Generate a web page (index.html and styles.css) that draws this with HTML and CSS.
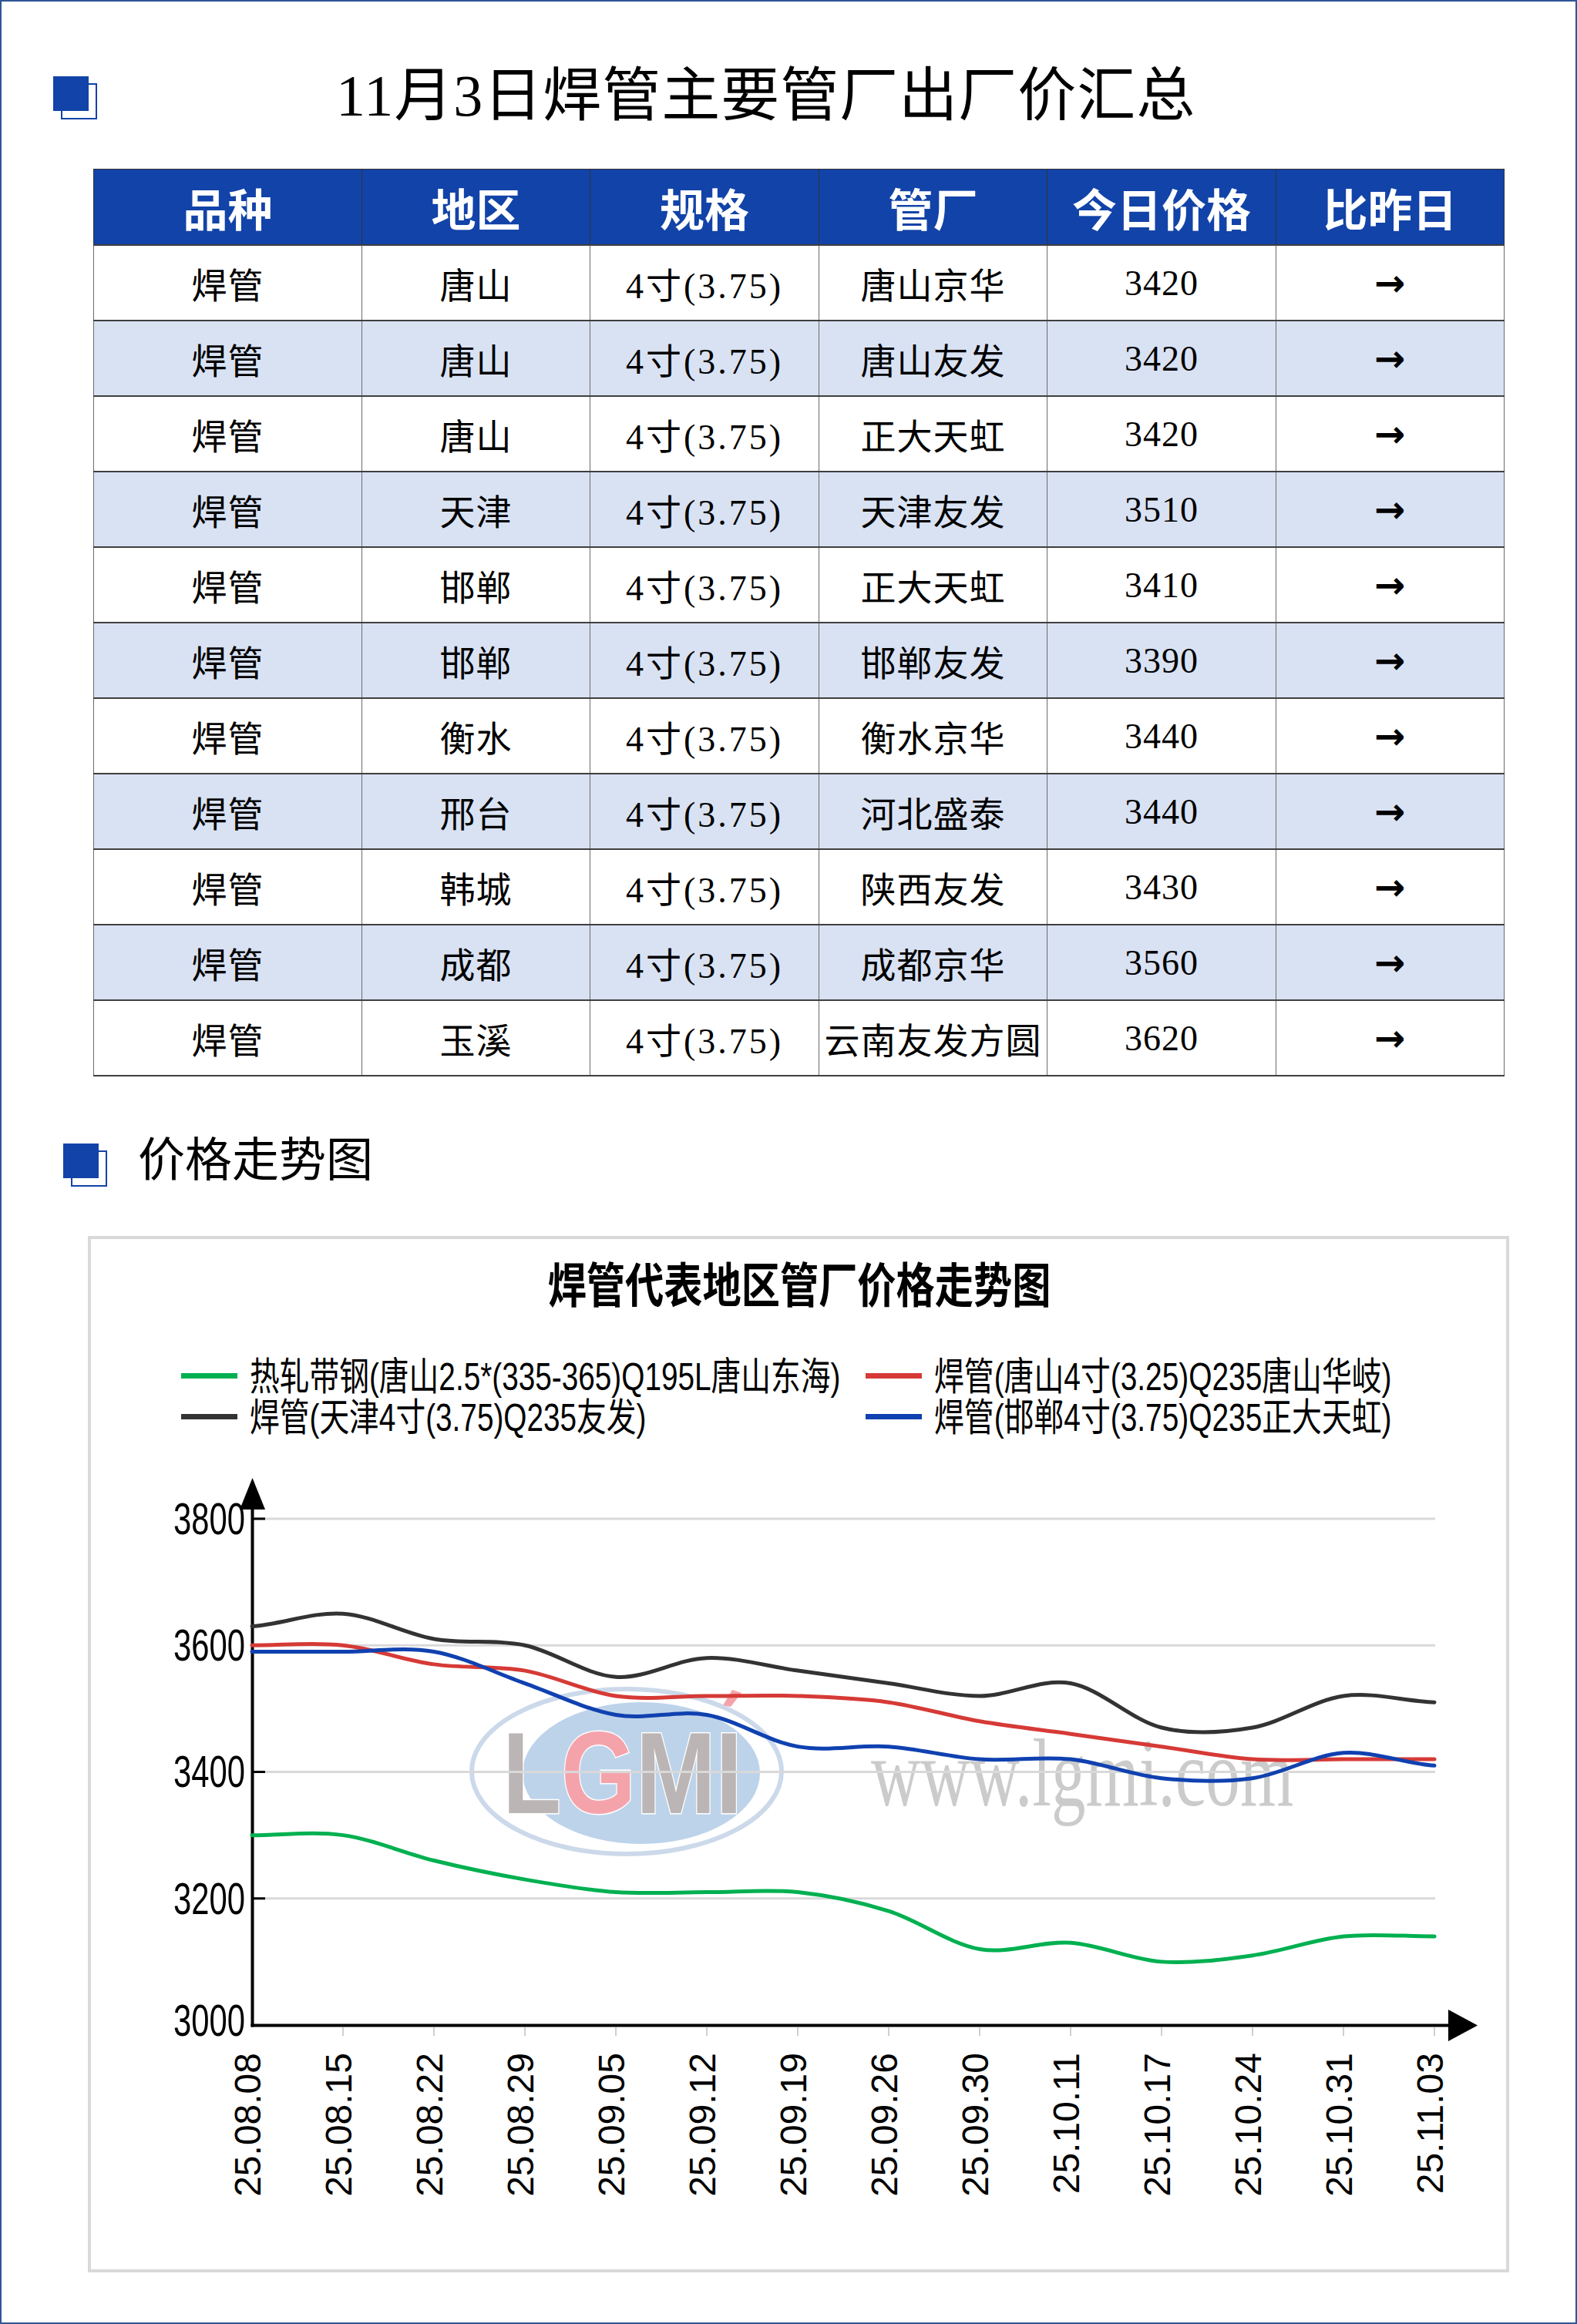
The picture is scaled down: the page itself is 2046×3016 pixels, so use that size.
FILE: index.html
```html
<!DOCTYPE html>
<html lang="zh-CN">
<head>
<meta charset="utf-8">
<title>11月3日焊管主要管厂出厂价汇总</title>
<link rel="stylesheet" href="styles.css">
</head>
<body>
<div class="page">
  <header class="title-row">
    <span class="mark mark-top"></span>
    <h1 class="title">11月3日焊管主要管厂出厂价汇总</h1>
  </header>

  <table class="price-table">
    <colgroup>
      <col class="c1"><col class="c2"><col class="c3"><col class="c4"><col class="c5"><col class="c6">
    </colgroup>
    <thead>
      <tr><th>品种</th><th>地区</th><th>规格</th><th>管厂</th><th>今日价格</th><th>比昨日</th></tr>
    </thead>
    <tbody>
      <tr><td>焊管</td><td>唐山</td><td class="spec">4寸(3.75)</td><td>唐山京华</td><td>3420</td><td class="arrow">→</td></tr>
      <tr class="alt"><td>焊管</td><td>唐山</td><td class="spec">4寸(3.75)</td><td>唐山友发</td><td>3420</td><td class="arrow">→</td></tr>
      <tr><td>焊管</td><td>唐山</td><td class="spec">4寸(3.75)</td><td>正大天虹</td><td>3420</td><td class="arrow">→</td></tr>
      <tr class="alt"><td>焊管</td><td>天津</td><td class="spec">4寸(3.75)</td><td>天津友发</td><td>3510</td><td class="arrow">→</td></tr>
      <tr><td>焊管</td><td>邯郸</td><td class="spec">4寸(3.75)</td><td>正大天虹</td><td>3410</td><td class="arrow">→</td></tr>
      <tr class="alt"><td>焊管</td><td>邯郸</td><td class="spec">4寸(3.75)</td><td>邯郸友发</td><td>3390</td><td class="arrow">→</td></tr>
      <tr><td>焊管</td><td>衡水</td><td class="spec">4寸(3.75)</td><td>衡水京华</td><td>3440</td><td class="arrow">→</td></tr>
      <tr class="alt"><td>焊管</td><td>邢台</td><td class="spec">4寸(3.75)</td><td>河北盛泰</td><td>3440</td><td class="arrow">→</td></tr>
      <tr><td>焊管</td><td>韩城</td><td class="spec">4寸(3.75)</td><td>陕西友发</td><td>3430</td><td class="arrow">→</td></tr>
      <tr class="alt"><td>焊管</td><td>成都</td><td class="spec">4寸(3.75)</td><td>成都京华</td><td>3560</td><td class="arrow">→</td></tr>
      <tr><td>焊管</td><td>玉溪</td><td class="spec">4寸(3.75)</td><td>云南友发方圆</td><td>3620</td><td class="arrow">→</td></tr>
    </tbody>
  </table>

  <div class="section-head">
    <span class="mark mark-sec"></span>
    <h2 class="section-title">价格走势图</h2>
  </div>

  <div class="chart-box">
    <svg class="chart" viewBox="118 1607 1836 1337" width="1836" height="1337" xmlns="http://www.w3.org/2000/svg">
      <text class="ch-title" transform="translate(1037 1690) scale(0.81 1)">焊管代表地区管厂价格走势图</text>

      <rect class="leg-green" x="235" y="1781" width="73" height="7"/>
      <text class="ch-leg" transform="translate(324 1803) scale(0.775 1)">热轧带钢(唐山2.5*(335-365)Q195L唐山东海)</text>
      <rect class="leg-black" x="235" y="1834" width="73" height="7"/>
      <text class="ch-leg" transform="translate(324 1856) scale(0.775 1)">焊管(天津4寸(3.75)Q235友发)</text>
      <rect class="leg-red" x="1123" y="1781" width="73" height="7"/>
      <text class="ch-leg" transform="translate(1212 1803) scale(0.777 1)">焊管(唐山4寸(3.25)Q235唐山华岐)</text>
      <rect class="leg-blue" x="1123" y="1834" width="73" height="7"/>
      <text class="ch-leg" transform="translate(1212 1856) scale(0.777 1)">焊管(邯郸4寸(3.75)Q235正大天虹)</text>

      <g class="wm">
        <ellipse class="wm-ring" cx="813" cy="2298" rx="201" ry="107"/>
        <ellipse class="wm-fill" cx="832" cy="2300" rx="154" ry="92"/>
        <text class="wm-logo" transform="translate(652 2352) scale(0.83 1)"><tspan class="wm-gray">L</tspan><tspan class="wm-red">G</tspan><tspan class="wm-gray">MI</tspan></text>
        <path class="wm-tick" d="M938 2212 L950 2192 L962 2196 L948 2214 Z"/>
        <text class="wm-url" transform="translate(1130 2342) scale(0.718 1)">www.lgmi.com</text>
      </g>

      <g class="grid">
        <line x1="327" x2="1862" y1="1970" y2="1970"/>
        <line x1="327" x2="1862" y1="2134.25" y2="2134.25"/>
        <line x1="327" x2="1862" y1="2298.5" y2="2298.5"/>
        <line x1="327" x2="1862" y1="2462.75" y2="2462.75"/>
      </g>

      <g class="y-ticks">
        <line x1="327" x2="344" y1="1970" y2="1970"/>
        <line x1="327" x2="344" y1="2134.25" y2="2134.25"/>
        <line x1="327" x2="344" y1="2298.5" y2="2298.5"/>
        <line x1="327" x2="344" y1="2462.75" y2="2462.75"/>
      </g>

      <g class="ch-y">
        <text transform="translate(318 1990) scale(0.733 1)">3800</text>
        <text transform="translate(318 2154) scale(0.733 1)">3600</text>
        <text transform="translate(318 2318) scale(0.733 1)">3400</text>
        <text transform="translate(318 2483) scale(0.733 1)">3200</text>
        <text transform="translate(318 2641) scale(0.733 1)">3000</text>
      </g>

      <g class="x-ticks">
        <line x1="445" x2="445" y1="2630" y2="2641"/>
        <line x1="563" x2="563" y1="2630" y2="2641"/>
        <line x1="681" x2="681" y1="2630" y2="2641"/>
        <line x1="799" x2="799" y1="2630" y2="2641"/>
        <line x1="917" x2="917" y1="2630" y2="2641"/>
        <line x1="1035" x2="1035" y1="2630" y2="2641"/>
        <line x1="1153" x2="1153" y1="2630" y2="2641"/>
        <line x1="1271" x2="1271" y1="2630" y2="2641"/>
        <line x1="1389" x2="1389" y1="2630" y2="2641"/>
        <line x1="1507" x2="1507" y1="2630" y2="2641"/>
        <line x1="1625" x2="1625" y1="2630" y2="2641"/>
        <line x1="1743" x2="1743" y1="2630" y2="2641"/>
        <line x1="1861" x2="1861" y1="2630" y2="2641"/>
      </g>

      <g class="axes">
        <line x1="327.5" x2="327.5" y1="1952" y2="2629.5"/>
        <polygon points="311,1958 327.5,1917 344,1958"/>
        <line x1="325.5" x2="1882" y1="2627.5" y2="2627.5"/>
        <polygon points="1879,2607 1917,2627.5 1879,2648"/>
      </g>

      <g class="ch-x">
        <text transform="translate(338 2663) rotate(-90)">25.08.08</text>
        <text transform="translate(456 2663) rotate(-90)">25.08.15</text>
        <text transform="translate(574 2663) rotate(-90)">25.08.22</text>
        <text transform="translate(692 2663) rotate(-90)">25.08.29</text>
        <text transform="translate(810 2663) rotate(-90)">25.09.05</text>
        <text transform="translate(928 2663) rotate(-90)">25.09.12</text>
        <text transform="translate(1046 2663) rotate(-90)">25.09.19</text>
        <text transform="translate(1164 2663) rotate(-90)">25.09.26</text>
        <text transform="translate(1282 2663) rotate(-90)">25.09.30</text>
        <text transform="translate(1400 2663) rotate(-90)">25.10.11</text>
        <text transform="translate(1518 2663) rotate(-90)">25.10.17</text>
        <text transform="translate(1636 2663) rotate(-90)">25.10.24</text>
        <text transform="translate(1754 2663) rotate(-90)">25.10.31</text>
        <text transform="translate(1872 2663) rotate(-90)">25.11.03</text>
      </g>

      <g class="series" transform="translate(327 2627) scale(1 -0.82125)">
        <path class="s-green" d="M0 300 C39 300 79 306.7 118 300 C157 293.3 197 271.7 236 260 C275 248.3 315 238.3 354 230 C393 221.7 433 213.3 472 210 C511 206.7 551 210 590 210 C629 210 669 215 708 210 C747 205 787 195 826 180 C865 165 905 128.3 944 120 C983 111.7 1023 133.3 1062 130 C1101 126.7 1141 103.3 1180 100 C1219 96.7 1259 103.3 1298 110 C1337 116.7 1377 135 1416 140 C1455 145 1495 140 1534 140"/>
        <path class="s-red" d="M0 600 C39 600 79 605 118 600 C157 595 197 576.7 236 570 C275 563.3 315 568.3 354 560 C393 551.7 433 526.7 472 520 C511 513.3 551 520 590 520 C629 520 669 521.7 708 520 C747 518.3 787 516.7 826 510 C865 503.3 905 488.3 944 480 C983 471.7 1023 466.7 1062 460 C1101 453.3 1141 446.7 1180 440 C1219 433.3 1259 423.3 1298 420 C1337 416.7 1377 420 1416 420 C1455 420 1495 420 1534 420"/>
        <path class="s-black" d="M0 630 C39 633.3 79 653.3 118 650 C157 646.7 197 618.3 236 610 C275 601.7 315 610 354 600 C393 590 433 553.3 472 550 C511 546.7 551 578.3 590 580 C629 581.7 669 566.7 708 560 C747 553.3 787 546.7 826 540 C865 533.3 905 520 944 520 C983 520 1023 548.3 1062 540 C1101 531.7 1141 481.7 1180 470 C1219 458.3 1259 461.7 1298 470 C1337 478.3 1377 513.3 1416 520 C1455 526.7 1495 511.7 1534 510"/>
        <path class="s-blue" d="M0 590 C39 590 79 590 118 590 C157 590 197 598.3 236 590 C275 581.7 315 556.7 354 540 C393 523.3 433 498.3 472 490 C511 481.7 551 498.3 590 490 C629 481.7 669 448.3 708 440 C747 431.7 787 443.3 826 440 C865 436.7 905 423.3 944 420 C983 416.7 1023 425 1062 420 C1101 415 1141 395 1180 390 C1219 385 1259 383.3 1298 390 C1337 396.7 1377 426.7 1416 430 C1455 433.3 1495 413.3 1534 410"/>
      </g>
    </svg>
  </div>
</div>
</body>
</html>
```

FILE: styles.css
```css
html, body {
  margin: 0;
  padding: 0;
  background: #ffffff;
}

.page {
  width: 2046px;
  height: 3016px;
  box-sizing: border-box;
  border: 2px solid #2f5597;
  background: #ffffff;
  overflow: hidden;
  font-family: "Liberation Serif", "Noto Sans CJK SC", serif;
  color: #000000;
}

/* ---------- heading marks ---------- */
.mark {
  position: relative;
  flex: none;
  width: 57px;
  height: 56px;
}
.mark::after {
  content: "";
  position: absolute;
  left: 10px;
  top: 9px;
  width: 47px;
  height: 47px;
  box-sizing: border-box;
  border: 2px solid #1243a8;
}
.mark::before {
  content: "";
  position: absolute;
  left: 0;
  top: 0;
  width: 46px;
  height: 45px;
  background: #1243a8;
  z-index: 1;
}

/* ---------- title ---------- */
.title-row {
  display: flex;
  align-items: flex-start;
}
.mark-top {
  margin: 97px 0 0 67px;
}
.title {
  margin: 84px 0 0 310px;
  font-size: 76px;
  line-height: 76px;
  font-weight: normal;
  letter-spacing: 1px;
  white-space: nowrap;
}

/* ---------- table ---------- */
.price-table {
  margin: 57px 0 0 119px;
  width: 1830px;
  border-collapse: collapse;
  table-layout: fixed;
}
.price-table .c1 { width: 348px; }
.price-table .c2 { width: 296px; }
.price-table .c3 { width: 297px; }
.price-table .c4 { width: 296px; }
.price-table .c5 { width: 297px; }
.price-table .c6 { width: 296px; }

.price-table th {
  height: 97px;
  padding: 0;
  background: #1243a8;
  color: #ffffff;
  font-family: "Noto Sans CJK SC", sans-serif;
  font-size: 58px;
  font-weight: 700;
  text-align: center;
  vertical-align: middle;
  border: 1px solid #333333;
  border-bottom: 2px solid #3f3f3f;
}
.price-table td {
  height: 96px;
  padding: 0;
  font-size: 46px;
  text-align: center;
  vertical-align: middle;
  letter-spacing: 1px;
  white-space: nowrap;
  border-left: 1px solid #6b6b6b;
  border-right: 1px solid #6b6b6b;
  border-top: 2px solid #3f3f3f;
  border-bottom: 2px solid #3f3f3f;
}
.price-table td.spec {
  letter-spacing: 3px;
}
.price-table tr.alt td {
  background: #d9e2f3;
}
.price-table td.arrow {
  font-family: "DejaVu Sans", sans-serif;
  font-size: 48px;
  font-weight: bold;
}

/* ---------- section head ---------- */
.section-head {
  display: flex;
  align-items: flex-start;
  margin-top: 79px;
}
.mark-sec {
  margin: 8px 0 0 80px;
}
.section-title {
  margin: 0 0 0 40px;
  font-size: 61px;
  line-height: 61px;
  font-weight: normal;
  white-space: nowrap;
}

/* ---------- chart ---------- */
.chart-box {
  margin: 64px 0 0 112px;
  width: 1844px;
  height: 1345px;
  box-sizing: border-box;
  border: 4px solid #d9d9d9;
  background: #ffffff;
}
.chart {
  display: block;
  width: 1836px;
  height: 1337px;
}

.ch-title {
  font-family: "Noto Sans CJK SC", sans-serif;
  font-weight: 700;
  font-size: 62px;
  fill: #000000;
  text-anchor: middle;
}
.ch-leg {
  font-family: "Liberation Sans", "Noto Sans CJK SC", sans-serif;
  font-size: 50px;
  fill: #000000;
}
.leg-green { fill: #00b050; }
.leg-black { fill: #333333; }
.leg-red { fill: #d63a36; }
.leg-blue { fill: #1041b0; }

.wm-ring {
  fill: none;
  stroke: #cbd9ea;
  stroke-width: 6;
}
.wm-fill {
  fill: #bdd3ea;
}
.wm-logo {
  font-family: "Liberation Sans", sans-serif;
  font-weight: 700;
  font-size: 150px;
  stroke: #ffffff;
  stroke-width: 3;
  paint-order: stroke;
}
.wm-gray { fill: #bbb5b5; }
.wm-red { fill: #f5a3ab; }
.wm-tick { fill: #f5a3ab; }
.wm-url {
  font-family: "Liberation Serif", serif;
  font-size: 124px;
  fill: #cbcbcb;
}

.grid line {
  stroke: #d9d9d9;
  stroke-width: 3;
}
.y-ticks line {
  stroke: #000000;
  stroke-width: 3;
}
.x-ticks line {
  stroke: #cfcfcf;
  stroke-width: 2;
}
.axes line {
  stroke: #000000;
  stroke-width: 4;
}
.axes polygon {
  fill: #000000;
}
.ch-y text {
  font-family: "Liberation Sans", sans-serif;
  font-size: 57px;
  fill: #000000;
  text-anchor: end;
}
.ch-x text {
  font-family: "Liberation Sans", sans-serif;
  font-size: 48px;
  fill: #000000;
  text-anchor: end;
}

.series path {
  fill: none;
  stroke-width: 5;
  vector-effect: non-scaling-stroke;
  stroke-linejoin: round;
  stroke-linecap: round;
}
.s-green { stroke: #00b050; }
.s-red { stroke: #d63a36; }
.s-black { stroke: #333333; }
.s-blue { stroke: #1041b0; }
```
